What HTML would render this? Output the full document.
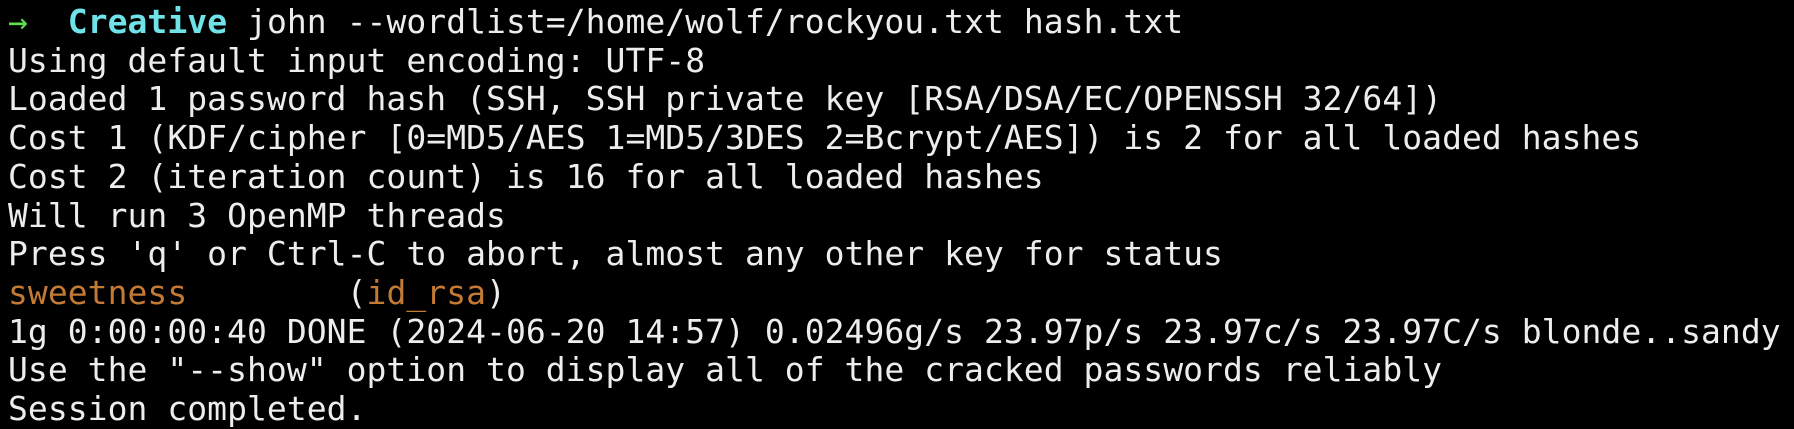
<!DOCTYPE html>
<html><head><meta charset="utf-8"><style>
html,body{margin:0;padding:0;background:#000;width:1794px;height:426px;overflow:hidden}
pre{margin:0;padding:0;position:absolute;left:8px;top:3px;font-family:"DejaVu Sans Mono","Liberation Mono",monospace;font-size:33px;letter-spacing:0.05px;line-height:38.7px;color:#ededed;white-space:pre}
.g{color:#5ee04a}.c{color:#6fe3e8;font-weight:bold}.o{color:#c27a35}
</style></head><body><pre><span class="g">→</span>  <span class="c">Creative</span> john --wordlist=/home/wolf/rockyou.txt hash.txt
Using default input encoding: UTF-8
Loaded 1 password hash (SSH, SSH private key [RSA/DSA/EC/OPENSSH 32/64])
Cost 1 (KDF/cipher [0=MD5/AES 1=MD5/3DES 2=Bcrypt/AES]) is 2 for all loaded hashes
Cost 2 (iteration count) is 16 for all loaded hashes
Will run 3 OpenMP threads
Press 'q' or Ctrl-C to abort, almost any other key for status
<span class="o">sweetness</span>        (<span class="o">id_rsa</span>)
1g 0:00:00:40 DONE (2024-06-20 14:57) 0.02496g/s 23.97p/s 23.97c/s 23.97C/s blonde..sandy
Use the "--show" option to display all of the cracked passwords reliably
Session completed.</pre></body></html>
